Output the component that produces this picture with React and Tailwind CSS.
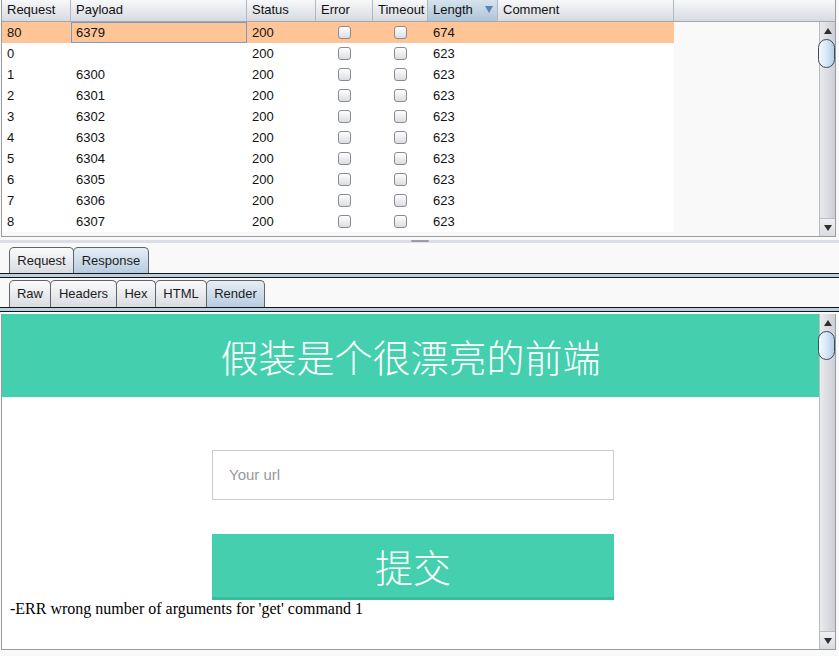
import React from "react";

const COLS = [
  { label: "Request", w: "w-[69px]" },
  { label: "Payload", w: "w-[176px]" },
  { label: "Status", w: "w-[69px]" },
  { label: "Error", w: "w-[57px]" },
  { label: "Timeout", w: "w-[55px]" },
  { label: "Length", w: "w-[70px]", sorted: true },
  { label: "Comment", w: "w-[176px]" },
];

const ROWS = [
  ["80", "6379", "200", "674"],
  ["0", "", "200", "623"],
  ["1", "6300", "200", "623"],
  ["2", "6301", "200", "623"],
  ["3", "6302", "200", "623"],
  ["4", "6303", "200", "623"],
  ["5", "6304", "200", "623"],
  ["6", "6305", "200", "623"],
  ["7", "6306", "200", "623"],
  ["8", "6307", "200", "623"],
];

const TABS_TOP = [
  { label: "Request", w: "w-[65px]" },
  { label: "Response", w: "w-[76px]", active: true },
];

const TABS_VIEW = [
  { label: "Raw", w: "w-[42px]" },
  { label: "Headers", w: "w-[67px]" },
  { label: "Hex", w: "w-[40px]" },
  { label: "HTML", w: "w-[52px]" },
  { label: "Render", w: "w-[59px]", active: true },
];

function Checkbox() {
  return (
    <div className="w-[13px] h-[13px] rounded-[3px] border border-[#878b92] bg-linear-to-b from-[#ffffff] to-[#dcdde1]" />
  );
}

function ScrollBar() {
  return (
    <div className="w-[16px] h-full flex flex-col bg-linear-to-r from-[#e9eaee] to-[#cdd0d7] border-l border-[#b9bcc3]">
      <div className="h-[17px] flex items-center justify-center">
        <div className="w-0 h-0 border-x-[4px] border-x-transparent border-b-[6px] border-b-[#2e2e2e]" />
      </div>
      <div className="h-[29px] -ml-[2px] rounded-full border border-[#3d4957] bg-linear-to-r from-[#f4f8fc] via-[#d8e7f5] to-[#b4cde4]" />
      <div className="flex-1" />
      <div className="h-[18px] flex items-center justify-center border-t border-[#b9bcc3] bg-linear-to-b from-[#eef0f3] to-[#d9dce1]">
        <div className="w-0 h-0 border-x-[4px] border-x-transparent border-t-[6px] border-t-[#2e2e2e]" />
      </div>
    </div>
  );
}

function Tab({ label, w, active, first }) {
  return (
    <div
      className={`${w} h-full ${first ? "" : "-ml-px"} rounded-t-[5px] border border-b-0 border-[#5f636b] flex items-center justify-center text-[#1c1c1c] ${
        active
          ? "bg-linear-to-b from-[#e6edf4] to-[#b7cce0]"
          : "bg-linear-to-b from-[#fbfbfc] to-[#d9dbe1]"
      }`}
    >
      {label}
    </div>
  );
}

function Band() {
  return (
    <div className="w-full border-y border-[#151515] h-[5px] bg-[#bcd0e3]" />
  );
}

export default function App() {
  return (
    <div
      className="w-[839px] h-[656px] bg-[#f9f9f9] text-[13px] text-[#111] overflow-hidden flex flex-col"
      style={{ fontFamily: '"Liberation Sans", Arial, sans-serif' }}
    >
      {/* Intruder results table */}
      <div className="ml-px w-[835px] h-[237px] border-x border-b border-[#9a9ba1] flex flex-col">
        <div className="h-[22px] flex border-b border-[#a3a7ae] bg-linear-to-b from-[#f7f8fa] to-[#d7dae0]">
          {COLS.map((c) => (
            <div
              key={c.label}
              className={`${c.w} h-full flex items-center pl-[5px] pr-[4px] pb-[2px] border-r border-[#b3b7be] ${
                c.sorted ? "bg-linear-to-b from-[#d7e3ee] to-[#aec4d8] justify-between" : ""
              }`}
            >
              <span>{c.label}</span>
              {c.sorted && (
                <div className="w-0 h-0 border-x-[4px] border-x-transparent border-t-[7px] border-t-[#5b84b1]" />
              )}
            </div>
          ))}
          <div className="flex-1" />
        </div>
        <div className="flex-1 flex min-h-0">
          <div className="flex-1 overflow-hidden">
            {ROWS.map((r, i) => (
              <div
                key={r[0]}
                className={`w-[672px] h-[21px] flex items-center ${i === 0 ? "bg-[#ffc596]" : "bg-white"}`}
              >
                <div className="w-[69px] pl-[5px]">{r[0]}</div>
                <div
                  className={`w-[176px] h-full flex items-center ${
                    i === 0 ? "border border-[#7d9cc4] pl-[4px]" : "pl-[5px]"
                  }`}
                >
                  {r[1]}
                </div>
                <div className="w-[69px] pl-[5px]">{r[2]}</div>
                <div className="w-[57px] flex justify-center">
                  <Checkbox />
                </div>
                <div className="w-[55px] flex justify-center">
                  <Checkbox />
                </div>
                <div className="w-[70px] pl-[5px]">{r[3]}</div>
                <div className="w-[176px]" />
              </div>
            ))}
          </div>
          <ScrollBar />
        </div>
      </div>

      {/* Splitter */}
      <div className="h-[9px] flex flex-col">
        <div className="h-[3px]" />
        <div className="h-[3px] bg-[#dcdee6] flex justify-center">
          <div className="w-[18px] h-[2px] bg-[#9b9ca4] rounded-sm" />
        </div>
      </div>

      {/* Request / Response tabs */}
      <div className="h-[27px] flex items-end pl-[9px] pt-px">
        {TABS_TOP.map((t, i) => (
          <Tab key={t.label} {...t} first={i === 0} />
        ))}
      </div>
      <Band />

      {/* Raw / Headers / ... tabs */}
      <div className="h-[29px] flex items-end pl-[9px] pt-[2px]">
        {TABS_VIEW.map((t, i) => (
          <Tab key={t.label} {...t} first={i === 0} />
        ))}
      </div>
      <Band />

      {/* Rendered response */}
      <div className="mt-[2px] ml-px w-[835px] h-[336px] border-x border-b border-[#9a9ba1] flex">
        <div className="flex-1 bg-white overflow-hidden">
          <div className="h-[83px] bg-[#44cfae] flex items-center justify-center">
            <span
              className="text-white text-[38px] font-light"
              style={{ fontFamily: '"Noto Sans CJK SC", "Noto Sans", sans-serif' }}
            >
              假装是个很漂亮的前端
            </span>
          </div>
          <div className="mt-[53px] ml-[210px] w-[402px] h-[50px] border border-[#cccccc] flex items-center pl-[16px] text-[15px] text-[#999999]">
            Your url
          </div>
          <div className="mt-[34px] ml-[210px] w-[402px] h-[66px] bg-[#44cfae] border-b-[3px] border-[#3cbb9c] flex items-center justify-center">
            <span
              className="text-white text-[38px] font-light"
              style={{ fontFamily: '"Noto Sans CJK SC", "Noto Sans", sans-serif' }}
            >
              提交
            </span>
          </div>
          <div
            className="pl-[8px] text-[16px] leading-[18px] text-black"
            style={{ fontFamily: '"Liberation Serif", "Times New Roman", serif' }}
          >
            -ERR wrong number of arguments for 'get' command 1
          </div>
        </div>
        <ScrollBar />
      </div>
    </div>
  );
}
